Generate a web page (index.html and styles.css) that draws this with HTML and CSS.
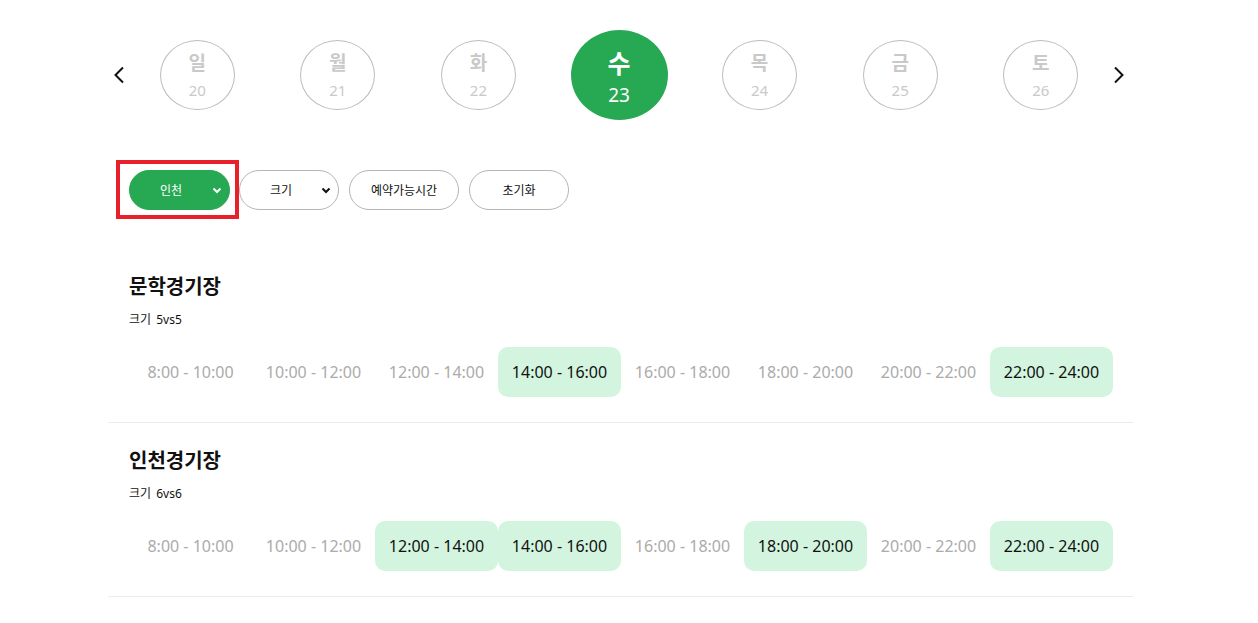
FILE: index.html
```html
<!DOCTYPE html>
<html lang="ko">
<head>
<meta charset="utf-8">
<link rel="stylesheet" href="styles.css">
</head>
<body>
<div class="page">
  <div class="dates">
    <div class="arrow arrow-prev">
      <svg width="12" height="18" viewBox="0 0 12 18"><path d="M10 1.5 L2.5 9 L10 16.5" fill="none" stroke="#111" stroke-width="2"/></svg>
    </div>
    <div class="day"><div class="circle"><span class="dname">일</span><span class="dnum">20</span></div></div>
    <div class="day"><div class="circle"><span class="dname">월</span><span class="dnum">21</span></div></div>
    <div class="day"><div class="circle"><span class="dname">화</span><span class="dnum">22</span></div></div>
    <div class="day"><div class="circle active"><span class="dname">수</span><span class="dnum">23</span></div></div>
    <div class="day"><div class="circle"><span class="dname">목</span><span class="dnum">24</span></div></div>
    <div class="day"><div class="circle"><span class="dname">금</span><span class="dnum">25</span></div></div>
    <div class="day"><div class="circle"><span class="dname">토</span><span class="dnum">26</span></div></div>
    <div class="arrow arrow-next">
      <svg width="12" height="18" viewBox="0 0 12 18"><path d="M2 1.5 L9.5 9 L2 16.5" fill="none" stroke="#111" stroke-width="2"/></svg>
    </div>
  </div>

  <div class="filters">
    <div class="highlight"></div>
    <div class="select select-green"><span>인천</span>
      <svg class="chev" width="10" height="7" viewBox="0 0 10 7"><path d="M1.5 1.5 L5 5 L8.5 1.5" fill="none" stroke="#fff" stroke-width="2"/></svg>
    </div>
    <div class="select"><span>크기</span>
      <svg class="chev" width="10" height="7" viewBox="0 0 10 7"><path d="M1.5 1.5 L5 5 L8.5 1.5" fill="none" stroke="#111" stroke-width="2"/></svg>
    </div>
    <div class="btn btn-wide">예약가능시간</div>
    <div class="btn">초기화</div>
  </div>

  <div class="stadium">
    <div class="title">문학경기장</div>
    <div class="size">크기 <span>5vs5</span></div>
    <div class="slots">
      <div class="slot">8:00 - 10:00</div>
      <div class="slot">10:00 - 12:00</div>
      <div class="slot">12:00 - 14:00</div>
      <div class="slot open">14:00 - 16:00</div>
      <div class="slot">16:00 - 18:00</div>
      <div class="slot">18:00 - 20:00</div>
      <div class="slot">20:00 - 22:00</div>
      <div class="slot open">22:00 - 24:00</div>
    </div>
  </div>

  <div class="stadium">
    <div class="title">인천경기장</div>
    <div class="size">크기 <span>6vs6</span></div>
    <div class="slots">
      <div class="slot">8:00 - 10:00</div>
      <div class="slot">10:00 - 12:00</div>
      <div class="slot open">12:00 - 14:00</div>
      <div class="slot open">14:00 - 16:00</div>
      <div class="slot">16:00 - 18:00</div>
      <div class="slot open">18:00 - 20:00</div>
      <div class="slot">20:00 - 22:00</div>
      <div class="slot open">22:00 - 24:00</div>
    </div>
  </div>
</div>
</body>
</html>
```

FILE: styles.css
```css
* { box-sizing: border-box; }
body {
  margin: 0;
  background: #fff;
  font-family: "Noto Sans", "Noto Sans CJK KR", sans-serif;
  color: #111;
}
.page {
  width: 1025px;
  margin-left: 108px;
}
.dates {
  display: flex;
  align-items: center;
  height: 90px;
  margin-top: 30px;
}
.arrow { display: flex; align-items: center; height: 18px; }
.arrow-prev { width: 19px; padding-left: 5px; }
.arrow-next { width: 22px; padding-left: 2px; }
.day {
  flex: 1;
  display: flex;
  justify-content: center;
  align-items: center;
}
.circle {
  width: 75px;
  height: 70px;
  border: 1px solid #bdbdbd;
  border-radius: 50%;
  display: flex;
  flex-direction: column;
  align-items: center;
  justify-content: center;
  color: #c9c9c9;
}
.dname { font-size: 19px; font-weight: 700; line-height: 22px; }
.dnum { font-size: 15px; line-height: 18px; margin-top: 7px; }
.circle.active {
  width: 97px;
  height: 90px;
  border: none;
  background: #27a853;
  color: #fff;
  padding-top: 4px;
}
.circle.active .dname { font-size: 25px; line-height: 28px; }
.circle.active .dnum { font-size: 19px; line-height: 22px; margin-top: 7px; }

.filters {
  position: relative;
  display: flex;
  gap: 10px;
  margin-top: 50px;
  margin-left: 21px;
  height: 40px;
}
.highlight {
  position: absolute;
  left: -13px;
  top: -10px;
  width: 123px;
  height: 59px;
  border: 4px solid #e8202a;
}
.select, .btn {
  height: 40px;
  border: 1px solid #b5b5b5;
  border-radius: 20px;
  font-size: 12px;
  display: flex;
  align-items: center;
  color: #111;
  background: #fff;
}
.select {
  width: 100px;
  padding-left: 30px;
  position: relative;
}
.select-green {
  width: 101px;
  background: #27a853;
  border-color: #27a853;
  color: #fff;
}
.select + .select { margin-left: -1px; }
.chev { position: absolute; right: 7px; top: 16px; }
.btn { width: 100px; justify-content: center; }
.btn-wide { width: 110px; }

.stadium {
  padding: 26px 0 25px 21px;
  border-bottom: 1px solid #ececec;
}
.filters + .stadium { margin-top: 39px; }
.title {
  font-size: 20px;
  font-weight: 700;
  line-height: 24px;
  color: #111;
}
.size {
  margin-top: 13px;
  font-size: 12px;
  line-height: 16px;
}
.size span { margin-left: 2px; }
.slots {
  display: flex;
  margin-top: 19px;
}
.slot {
  width: 123px;
  height: 50px;
  border-radius: 10px;
  display: flex;
  align-items: center;
  justify-content: center;
  font-size: 16px;
  color: #ababab;
}
.slot.open {
  background: #d3f5df;
  color: #111;
}
```
